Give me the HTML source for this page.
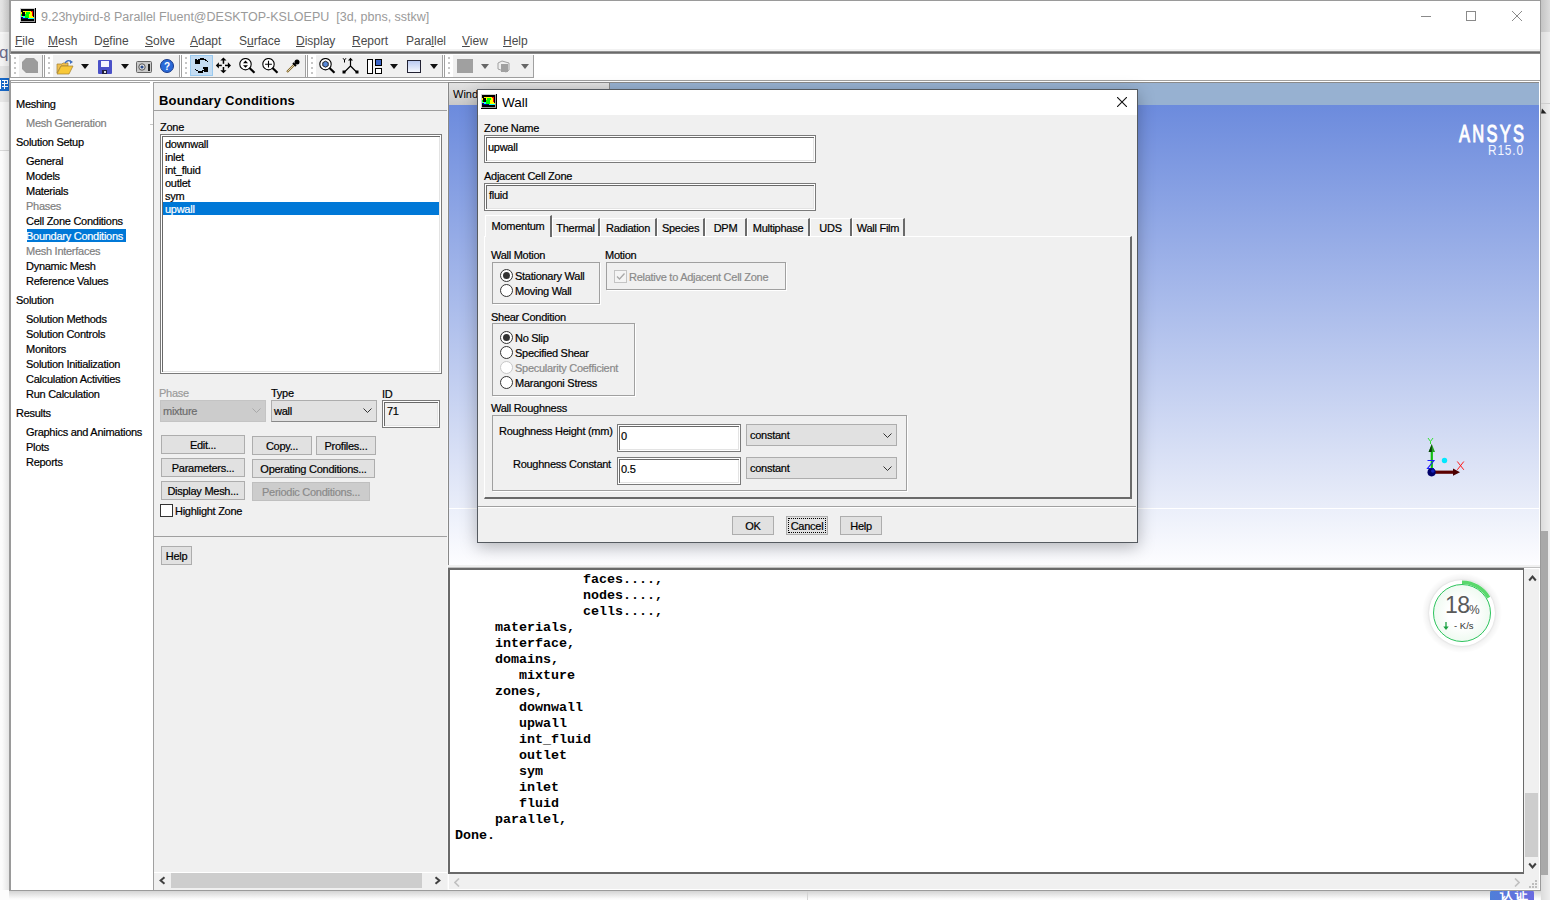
<!DOCTYPE html>
<html><head><meta charset="utf-8">
<style>
*{box-sizing:border-box;}
html,body{margin:0;padding:0;}
body{width:1550px;height:900px;position:relative;overflow:hidden;background:#f4f4f4;font-family:"Liberation Sans",sans-serif;font-size:11px;color:#000;}
.a{position:absolute;}
.t{position:absolute;white-space:nowrap;line-height:15px;font-size:11px;letter-spacing:-0.27px;-webkit-text-stroke:0.2px currentColor;}
.ln{position:absolute;background:#a0a0a0;}
.btn{background:#e1e1e1;border:1px solid #adadad;text-align:center;font-size:11px;letter-spacing:-0.27px;line-height:19px;white-space:nowrap;-webkit-text-stroke:0.2px currentColor;}
.btn.dis{background:#cccccc;border-color:#bfbfbf;color:#8a8a8a;}
.ent{border:1px solid #7a7a7a;box-shadow:inset 1px 1px 0 #fff,inset -1px -1px 0 #fff,inset 2px 2px 0 #696969,inset -2px -2px 0 #e3e3e3;}
.grp{border:1px solid #a0a0a0;box-shadow:1px 1px 0 #fff;}
.cmb{background:#e1e1e1;border:1px solid #adadad;}
.tab{height:18px;background:#f0f0f0;border-left:1px solid #fff;border-top:1px solid #fff;border-right:2px solid #6a6a6a;font-size:11px;letter-spacing:-0.27px;line-height:19px;text-align:center;white-space:nowrap;-webkit-text-stroke:0.2px currentColor;}
.tab.sel{line-height:21px;}
.rad{width:13px;height:13px;border-radius:50%;border:1px solid #333;background:#fff;}
.rad.on::after{content:"";position:absolute;left:2px;top:2px;width:7px;height:7px;border-radius:50%;background:#333;}
.rad.dis{border-color:#c8c8c8;}
</style></head>
<body>
<!-- desktop background pieces -->
<div class="a" style="left:0;top:0;width:10px;height:900px;background:#f2f2f2;"></div>
<div class="a" style="left:0;top:0;width:10px;height:32px;background:linear-gradient(90deg,#e4e4e4,#d4d4d4);"></div>
<div class="a" style="left:0;top:32px;width:10px;height:2px;background:#f6f6f6;"></div>
<div class="a" style="left:0;top:34px;width:10px;height:32px;background:#f3f3f3;"></div>
<div class="a" style="left:-1px;top:43px;font-size:17px;line-height:20px;color:#6b6b8a;">q</div>
<div class="a" style="left:0;top:66px;width:10px;height:12px;background:#e3e3e3;"></div>
<div class="a" style="left:0;top:78px;width:10px;height:13px;background:#1668c8;"></div>
<svg class="a" style="left:0;top:79px" width="9" height="11"><g fill="#fff"><rect x="0" y="1" width="1" height="9"/><rect x="2" y="1" width="6" height="1"/><rect x="2" y="4" width="6" height="1"/><rect x="2" y="7" width="6" height="1"/><rect x="4" y="1" width="1" height="9"/><rect x="7" y="1" width="1" height="4"/></g></svg>
<div class="a" style="left:0;top:91px;width:10px;height:11px;background:#e6e6e6;"></div>
<div class="a" style="left:0;top:102px;width:10px;height:48px;background:#f6f6f6;"></div>
<div class="a" style="left:0;top:150px;width:10px;height:1px;background:#d8d8d8;"></div>
<div class="a" style="left:0;top:151px;width:10px;height:749px;background:#fbfbfb;"></div>
<div class="a" style="left:2px;top:0;width:7px;height:895px;background:linear-gradient(90deg,rgba(0,0,0,0),rgba(0,0,0,0.09));"></div>
<div class="a" style="left:0;top:890px;width:1550px;height:10px;background:#fcfcfc;"></div><div class="a" style="left:9px;top:891px;width:1532px;height:8px;background:linear-gradient(rgba(0,0,0,0.16),rgba(0,0,0,0));"></div>
<div class="a" style="left:1541px;top:0;width:9px;height:900px;background:linear-gradient(90deg,#dcdcdc,#eeeeee);"></div>
<div class="a" style="left:1541px;top:0;width:9px;height:32px;background:linear-gradient(90deg,#c4c4c4,#dcdcdc);"></div>
<div class="a" style="left:1541px;top:103px;width:9px;height:1px;background:#cfcfcf;"></div>
<svg class="a" style="left:1541px;top:108px" width="6" height="6"><path d="M0 5.5H5.5L1 0.5Z" fill="#222"/></svg>
<div class="a" style="left:1541px;top:531px;width:7px;height:344px;background:#a9a9a9;"></div>
<div class="a" style="left:807px;top:891px;width:1px;height:9px;background:#d4d4d4;"></div>
<div class="a" style="left:1490px;top:890px;width:44px;height:10px;background:linear-gradient(90deg,#4f7fd8,#6a6ae0);border-radius:3px 3px 0 0;"></div>
<div class="a" style="left:1500px;top:887px;font-size:13px;line-height:16px;color:#fff;font-weight:bold;letter-spacing:2px;">&#35748;&#35777;</div>

<!-- main window -->
<div id="win" class="a" style="left:9px;top:0;width:1532px;height:891px;background:#fff;border:1px solid #9a9a9a;border-left:2px solid #9a9a9a;">
</div>

<!-- title bar -->
<div id="title">
  <svg class="a" style="left:20px;top:8px" width="16" height="15" viewBox="0 0 16 15">
    <rect x="0" y="0" width="15" height="14" fill="#d0d0d0"/><rect x="1" y="1" width="13" height="12" fill="#000"/><rect x="15" y="0" width="1" height="15" fill="#000"/><rect x="0" y="14" width="16" height="1" fill="#000"/><rect x="14" y="1" width="1" height="13" fill="#9a9a9a"/><rect x="1" y="13" width="14" height="1" fill="#9a9a9a"/>
    <rect x="3" y="3" width="8" height="1" fill="#ffff00"/><rect x="11" y="3" width="2" height="1" fill="#ff0000"/>
    <rect x="1" y="4" width="12" height="5" fill="#ffff00"/><rect x="6" y="4" width="4" height="2" fill="#00ff00"/><rect x="5" y="6" width="4" height="3" fill="#00ff00"/><rect x="12" y="3" width="1" height="5" fill="#ff0000"/><rect x="13" y="6" width="1" height="2" fill="#000"/>
    <rect x="1" y="6" width="1" height="2" fill="#00ff00"/><rect x="1" y="8" width="1" height="1" fill="#00ffff"/><rect x="2" y="4" width="3" height="4" fill="#000"/><rect x="3" y="8" width="2" height="1" fill="#00ffff"/>
    <rect x="1" y="9" width="2" height="1" fill="#000080"/><rect x="3" y="9" width="2" height="1" fill="#00ffff"/><rect x="5" y="9" width="4" height="1" fill="#00ff00"/><rect x="9" y="9" width="5" height="1" fill="#ffff00"/>
    <rect x="2" y="10" width="6" height="1" fill="#000080"/><rect x="8" y="10" width="6" height="1" fill="#00ffff"/>
  </svg>
  <div class="a" style="left:41px;top:9px;font-size:12.5px;line-height:16px;color:#9a9a9a;white-space:nowrap;">9.23hybird-8 Parallel Fluent@DESKTOP-KSLOEPU&nbsp;&nbsp;[3d, pbns, sstkw]</div>
  <!-- window buttons -->
  <div class="a" style="left:1421px;top:16px;width:10px;height:1px;background:#8a8a8a;"></div>
  <div class="a" style="left:1466px;top:11px;width:10px;height:10px;border:1px solid #8a8a8a;"></div>
  <svg class="a" style="left:1512px;top:11px" width="10" height="10" viewBox="0 0 10 10"><path d="M0 0L10 10M10 0L0 10" stroke="#8a8a8a" stroke-width="1"/></svg>
</div>

<!-- menubar -->
<div id="menu" style="color:#4a4a4a;font-size:12px;">
  <div class="a" style="left:15px;top:34px;line-height:15px;white-space:nowrap;"><u>F</u>ile</div>
  <div class="a" style="left:48px;top:34px;line-height:15px;white-space:nowrap;"><u>M</u>esh</div>
  <div class="a" style="left:94px;top:34px;line-height:15px;white-space:nowrap;">D<u>e</u>fine</div>
  <div class="a" style="left:145px;top:34px;line-height:15px;white-space:nowrap;"><u>S</u>olve</div>
  <div class="a" style="left:190px;top:34px;line-height:15px;white-space:nowrap;"><u>A</u>dapt</div>
  <div class="a" style="left:239px;top:34px;line-height:15px;white-space:nowrap;">S<u>u</u>rface</div>
  <div class="a" style="left:296px;top:34px;line-height:15px;white-space:nowrap;"><u>D</u>isplay</div>
  <div class="a" style="left:352px;top:34px;line-height:15px;white-space:nowrap;"><u>R</u>eport</div>
  <div class="a" style="left:406px;top:34px;line-height:15px;white-space:nowrap;">Para<u>l</u>lel</div>
  <div class="a" style="left:462px;top:34px;line-height:15px;white-space:nowrap;"><u>V</u>iew</div>
  <div class="a" style="left:503px;top:34px;line-height:15px;white-space:nowrap;"><u>H</u>elp</div>
</div>
<div class="a" style="left:11px;top:49px;width:1529px;height:2px;background:#f2f2f2;"></div>
<div class="a" style="left:11px;top:51px;width:1529px;height:3px;background:linear-gradient(#a8a8a8,#6a6a6a 50%,#9a9a9a);"></div>

<!-- toolbar -->
<div id="tb">
  <div class="a" style="left:10px;top:54px;width:1530px;height:26px;background:#fff;"></div>
  <!-- group backgrounds -->
  <div class="a" style="left:19px;top:55px;width:23px;height:22px;background:#f0f0f0;"></div>
  <div class="a" style="left:53px;top:55px;width:127px;height:22px;background:#f0f0f0;"></div>
  <div class="a" style="left:190px;top:55px;width:115px;height:22px;background:#f0f0f0;"></div>
  <div class="a" style="left:316px;top:55px;width:127px;height:22px;background:#f0f0f0;"></div>
  <div class="a" style="left:453px;top:55px;width:81px;height:22px;background:#f0f0f0;"></div>
  <!-- separators -->
  <div class="ln" style="left:10px;top:55px;width:1px;height:22px;"></div>
  <div class="ln" style="left:42px;top:55px;width:1px;height:22px;"></div>
  <div class="ln" style="left:44px;top:55px;width:1px;height:22px;"></div>
  <div class="ln" style="left:179px;top:55px;width:1px;height:22px;"></div>
  <div class="ln" style="left:181px;top:55px;width:1px;height:22px;"></div>
  <div class="ln" style="left:305px;top:55px;width:1px;height:22px;"></div>
  <div class="ln" style="left:307px;top:55px;width:1px;height:22px;"></div>
  <div class="ln" style="left:442px;top:55px;width:1px;height:22px;"></div>
  <div class="ln" style="left:444px;top:55px;width:1px;height:22px;"></div>
  <div class="ln" style="left:533px;top:55px;width:1px;height:23px;"></div>
  <div class="ln" style="left:10px;top:77px;width:524px;height:1px;"></div>
  <div class="ln" style="left:10px;top:80px;width:1530px;height:1px;"></div>
  <!-- grippers -->
  <svg class="a" style="left:14px;top:57px" width="3" height="18"><g fill="#c6c6c6"><rect x="0" y="0" width="2" height="2"/><rect x="0" y="5" width="2" height="2"/><rect x="0" y="10" width="2" height="2"/><rect x="0" y="15" width="2" height="2"/></g></svg>
  <svg class="a" style="left:48px;top:57px" width="3" height="18"><g fill="#c6c6c6"><rect x="0" y="0" width="2" height="2"/><rect x="0" y="5" width="2" height="2"/><rect x="0" y="10" width="2" height="2"/><rect x="0" y="15" width="2" height="2"/></g></svg>
  <svg class="a" style="left:185px;top:57px" width="3" height="18"><g fill="#c6c6c6"><rect x="0" y="0" width="2" height="2"/><rect x="0" y="5" width="2" height="2"/><rect x="0" y="10" width="2" height="2"/><rect x="0" y="15" width="2" height="2"/></g></svg>
  <svg class="a" style="left:311px;top:57px" width="3" height="18"><g fill="#c6c6c6"><rect x="0" y="0" width="2" height="2"/><rect x="0" y="5" width="2" height="2"/><rect x="0" y="10" width="2" height="2"/><rect x="0" y="15" width="2" height="2"/></g></svg>
  <svg class="a" style="left:448px;top:57px" width="3" height="18"><g fill="#c6c6c6"><rect x="0" y="0" width="2" height="2"/><rect x="0" y="5" width="2" height="2"/><rect x="0" y="10" width="2" height="2"/><rect x="0" y="15" width="2" height="2"/></g></svg>
  <!-- icons -->
  <svg class="a" style="left:22px;top:58px" width="16" height="15"><path d="M4 0H12L16 4V15H4L0 11V4Z" fill="#9c9c9c"/></svg>
  <svg class="a" style="left:56px;top:59px" width="18" height="16" viewBox="0 0 18 16"><path d="M1 5H6L7 4H12V7H5L1 14Z" fill="#f0c050" stroke="#a08030" stroke-width="0.7"/><path d="M1 15L5 7H17L13 15Z" fill="#f8c838" stroke="#a08030" stroke-width="0.7"/><path d="M9 4Q12 0 15 3" fill="none" stroke="#4070c0" stroke-width="1.3"/><path d="M14 1L17 3L14 5Z" fill="#4070c0"/></svg>
  <svg class="a" style="left:81px;top:64px" width="8" height="5"><path d="M0 0H8L4 5Z" fill="#111"/></svg>
  <svg class="a" style="left:98px;top:60px" width="14" height="14" viewBox="0 0 14 14"><rect x="0" y="0" width="14" height="14" rx="1" fill="#4a50c8"/><rect x="3" y="1" width="8" height="6" fill="#f4f4ff"/><rect x="4" y="10" width="5" height="4" fill="#202040"/><rect x="6" y="11" width="2" height="2" fill="#ddd"/></svg>
  <svg class="a" style="left:121px;top:64px" width="8" height="5"><path d="M0 0H8L4 5Z" fill="#111"/></svg>
  <svg class="a" style="left:136px;top:60px" width="16" height="13" viewBox="0 0 16 13"><rect x="0.5" y="1.5" width="15" height="11" rx="1" fill="#c8c8c8" stroke="#666" stroke-width="1"/><circle cx="6" cy="7" r="3.2" fill="#e8e8e8" stroke="#555"/><circle cx="6" cy="7" r="1.6" fill="#2a4a8a"/><rect x="12" y="4" width="2" height="7" fill="#222"/></svg>
  <svg class="a" style="left:160px;top:59px" width="14" height="14" viewBox="0 0 14 14"><circle cx="7" cy="7" r="6.5" fill="#2a6ad8" stroke="#1a3a8a" stroke-width="1"/><text x="7" y="11" font-size="10" font-weight="bold" text-anchor="middle" fill="#fff" font-family="Liberation Sans">?</text></svg>
  <!-- rotate (pressed) -->
  <div class="a" style="left:190px;top:55px;width:23px;height:21px;background:#c4dcf2;border:1px solid #99c9ef;"></div>
  <svg class="a" style="left:189px;top:54px" width="24" height="22" viewBox="0 0 24 22" shape-rendering="crispEdges"><g fill="#000"><rect x="6" y="5" width="2" height="5"/><rect x="8" y="6" width="3" height="4"/><rect x="9" y="5" width="2" height="1"/><rect x="11" y="4" width="4" height="2"/><rect x="15" y="5" width="2" height="1"/><rect x="16" y="6" width="2" height="1"/><rect x="18" y="7" width="1" height="1"/><rect x="15" y="13" width="4" height="5"/><rect x="14" y="13" width="1" height="2"/><rect x="6" y="15" width="1" height="1"/><rect x="7" y="16" width="2" height="1"/><rect x="9" y="17" width="5" height="2"/><rect x="13" y="16" width="2" height="1"/></g></svg>
  <svg class="a" style="left:215px;top:57px" width="17" height="17" viewBox="0 0 17 17"><g fill="#000"><path d="M8.4 0.5L5.3 3.6H11.5Z"/><rect x="7.7" y="3" width="1.5" height="3.8"/><path d="M8.4 16.3L5.3 13.2H11.5Z"/><rect x="7.7" y="10" width="1.5" height="3.8"/><path d="M0.8 8.4L3.9 5.3V11.5Z"/><rect x="3.5" y="7.7" width="3.3" height="1.5"/><path d="M16 8.4L12.9 5.3V11.5Z"/><rect x="10" y="7.7" width="3.3" height="1.5"/></g></svg>
  <svg class="a" style="left:239px;top:58px" width="17" height="16" viewBox="0 0 17 16"><circle cx="6.5" cy="6.2" r="5.7" fill="#fff" stroke="#000" stroke-width="1.1"/><path d="M10.5 10L15.5 14.8" stroke="#000" stroke-width="2.2"/><path d="M6.5 2.6L9 5.2H4Z M6.5 9.8L9 7.2H4Z" fill="#000"/></svg>
  <svg class="a" style="left:262px;top:58px" width="17" height="16" viewBox="0 0 17 16"><circle cx="6.5" cy="6.2" r="5.7" fill="#fff" stroke="#000" stroke-width="1.1"/><path d="M10.5 10L15.5 14.8" stroke="#000" stroke-width="2.2"/><path d="M6.5 2.8V9.6M3.1 6.2H9.9" stroke="#000" stroke-width="1.1"/></svg>
  <svg class="a" style="left:286px;top:59px" width="14" height="14" viewBox="0 0 14 14"><path d="M1 13L9 5" stroke="#806020" stroke-width="2.2"/><path d="M1.5 12.5L9 5" stroke="#f0f0d0" stroke-width="0.8"/><path d="M7 4L10 7" stroke="#000" stroke-width="2"/><circle cx="11" cy="3" r="2.5" fill="#000"/></svg>
  <svg class="a" style="left:319px;top:58px" width="17" height="16" viewBox="0 0 17 16"><circle cx="6.5" cy="6.2" r="5.7" fill="#fff" stroke="#000" stroke-width="1.1"/><path d="M10.5 10L15.5 14.8" stroke="#000" stroke-width="2.2"/><path d="M3.8 4.6L6.5 3.2L9.2 4.6V7.8L6.5 9.2L3.8 7.8Z" fill="#5a8ad8" stroke="#111" stroke-width="0.9"/></svg>
  <svg class="a" style="left:342px;top:57px" width="17" height="17" viewBox="0 0 17 17"><path d="M8.5 3V9L2 15.5M8.5 9L15 15.5" fill="none" stroke="#000" stroke-width="1.2"/><path d="M8.5 0.8L11 3.6H6Z" fill="#000"/><rect x="0.5" y="13.5" width="3" height="3" fill="#000"/><rect x="13.5" y="13.5" width="3" height="3" fill="#000"/><path d="M1 1.2L2.5 3L4 1.2M2.5 3V5.5" fill="none" stroke="#000" stroke-width="1"/></svg>
  <svg class="a" style="left:367px;top:59px" width="15" height="15" viewBox="0 0 15 15"><rect x="0.5" y="0.5" width="5" height="14" fill="#fff" stroke="#000"/><rect x="8.5" y="0.5" width="6" height="6" fill="#3a64c8" stroke="#000"/><rect x="8.5" y="9.5" width="6" height="5" fill="#fff" stroke="#000"/></svg>
  <svg class="a" style="left:390px;top:64px" width="8" height="5"><path d="M0 0H8L4 5Z" fill="#111"/></svg>
  <svg class="a" style="left:407px;top:60px" width="14" height="13" viewBox="0 0 14 13"><defs><linearGradient id="gsq" x1="0" y1="0" x2="0" y2="1"><stop offset="0" stop-color="#b8c8f0"/><stop offset="1" stop-color="#f8faff"/></linearGradient></defs><rect x="0.5" y="0.5" width="13" height="12" fill="url(#gsq)" stroke="#223" stroke-width="1"/></svg>
  <svg class="a" style="left:430px;top:64px" width="8" height="5"><path d="M0 0H8L4 5Z" fill="#111"/></svg>
  <div class="a" style="left:457px;top:59px;width:16px;height:14px;background:#a0a0a0;"></div>
  <svg class="a" style="left:481px;top:64px" width="8" height="5"><path d="M0 0H8L4 5Z" fill="#666"/></svg>
  <svg class="a" style="left:497px;top:60px" width="16" height="13" viewBox="0 0 16 13"><path d="M1 3L5 1L12 3V10L9 12L1 9Z" fill="#eee" stroke="#a0a0a0" stroke-width="1"/><path d="M4 4H11V12H4Z" fill="#a0a0a0"/></svg>
  <svg class="a" style="left:521px;top:64px" width="8" height="5"><path d="M0 0H8L4 5Z" fill="#666"/></svg>
</div>

<!-- navigation tree -->
<div id="tree">
  <div class="ln" style="left:10px;top:82px;width:140px;height:1px;"></div>
  <div class="ln" style="left:150px;top:124px;width:3px;height:1px;background:#c8c8c8;"></div>
  <div class="t" style="left:16px;top:97px;">Meshing</div>
  <div class="t" style="left:26px;top:116px;color:#808080;">Mesh Generation</div>
  <div class="t" style="left:16px;top:135px;">Solution Setup</div>
  <div class="t" style="left:26px;top:154px;">General</div>
  <div class="t" style="left:26px;top:169px;">Models</div>
  <div class="t" style="left:26px;top:184px;">Materials</div>
  <div class="t" style="left:26px;top:199px;color:#808080;">Phases</div>
  <div class="t" style="left:26px;top:214px;">Cell Zone Conditions</div>
  <div class="a" style="left:27px;top:229px;width:99px;height:13px;background:#0078d7;"></div>
  <div class="t" style="left:26px;top:229px;color:#fff;">Boundary Conditions</div>
  <div class="t" style="left:26px;top:244px;color:#808080;">Mesh Interfaces</div>
  <div class="t" style="left:26px;top:259px;">Dynamic Mesh</div>
  <div class="t" style="left:26px;top:274px;">Reference Values</div>
  <div class="t" style="left:16px;top:293px;">Solution</div>
  <div class="t" style="left:26px;top:312px;">Solution Methods</div>
  <div class="t" style="left:26px;top:327px;">Solution Controls</div>
  <div class="t" style="left:26px;top:342px;">Monitors</div>
  <div class="t" style="left:26px;top:357px;">Solution Initialization</div>
  <div class="t" style="left:26px;top:372px;">Calculation Activities</div>
  <div class="t" style="left:26px;top:387px;">Run Calculation</div>
  <div class="t" style="left:16px;top:406px;">Results</div>
  <div class="t" style="left:26px;top:425px;">Graphics and Animations</div>
  <div class="t" style="left:26px;top:440px;">Plots</div>
  <div class="t" style="left:26px;top:455px;">Reports</div>
</div>

<!-- task page -->
<div id="task">
  <div class="a" style="left:153px;top:82px;width:295px;height:808px;background:#f0f0f0;border-left:1px solid #a0a0a0;border-top:1px solid #a0a0a0;"></div>
  <div class="a" style="left:159px;top:93px;font-weight:bold;font-size:13px;line-height:16px;white-space:nowrap;letter-spacing:0.2px;">Boundary Conditions</div>
  <div class="ln" style="left:154px;top:110px;width:293px;height:1px;"></div>
  <div class="t" style="left:160px;top:120px;">Zone</div>
  <!-- listbox -->
  <div class="a ent" style="left:160px;top:134px;width:282px;height:240px;background:#fff;"></div>
  <div class="t" style="left:165px;top:137px;">downwall</div>
  <div class="t" style="left:165px;top:150px;">inlet</div>
  <div class="t" style="left:165px;top:163px;">int_fluid</div>
  <div class="t" style="left:165px;top:176px;">outlet</div>
  <div class="t" style="left:165px;top:189px;">sym</div>
  <div class="a" style="left:163px;top:202px;width:276px;height:13px;background:#0078d7;"></div>
  <div class="t" style="left:165px;top:202px;color:#fff;">upwall</div>
  <!-- phase/type/id -->
  <div class="t" style="left:159px;top:386px;color:#9a9a9a;">Phase</div>
  <div class="a" style="left:160px;top:400px;width:106px;height:22px;background:#cccccc;border:1px solid #c4c4c4;"></div>
  <div class="t" style="left:163px;top:404px;color:#6d6d6d;">mixture</div>
  <svg class="a" style="left:252px;top:408px" width="9" height="5"><path d="M0.5 0.5L4.5 4.5L8.5 0.5" fill="none" stroke="#a8a8a8" stroke-width="1"/></svg>
  <div class="t" style="left:271px;top:386px;">Type</div>
  <div class="a" style="left:271px;top:400px;width:106px;height:22px;background:#e1e1e1;border:1px solid #adadad;border-bottom-color:#888;"></div>
  <div class="t" style="left:274px;top:404px;">wall</div>
  <svg class="a" style="left:363px;top:408px" width="9" height="5"><path d="M0.5 0.5L4.5 4.5L8.5 0.5" fill="none" stroke="#333" stroke-width="1"/></svg>
  <div class="t" style="left:382px;top:387px;">ID</div>
  <div class="a ent" style="left:382px;top:400px;width:58px;height:28px;background:#f0f0f0;"></div>
  <div class="t" style="left:387px;top:404px;">71</div>
  <!-- buttons -->
  <div class="btn a" style="left:161px;top:435px;width:84px;height:19px;">Edit...</div>
  <div class="btn a" style="left:252px;top:436px;width:60px;height:19px;">Copy...</div>
  <div class="btn a" style="left:316px;top:436px;width:60px;height:19px;">Profiles...</div>
  <div class="btn a" style="left:161px;top:458px;width:84px;height:19px;">Parameters...</div>
  <div class="btn a" style="left:252px;top:459px;width:123px;height:19px;">Operating Conditions...</div>
  <div class="btn a" style="left:161px;top:481px;width:84px;height:19px;">Display Mesh...</div>
  <div class="btn a dis" style="left:252px;top:482px;width:118px;height:19px;">Periodic Conditions...</div>
  <div class="a" style="left:160px;top:504px;width:13px;height:13px;background:#fff;border:1px solid #333;"></div>
  <div class="t" style="left:175px;top:504px;">Highlight Zone</div>
  <div class="ln" style="left:154px;top:536px;width:293px;height:1px;"></div>
  <div class="btn a" style="left:161px;top:546px;width:31px;height:19px;">Help</div>
  <!-- h scrollbar -->
  <div class="a" style="left:154px;top:872px;width:293px;height:1px;background:#fff;"></div>
  <div class="a" style="left:154px;top:873px;width:293px;height:16px;background:#f0f0f0;"></div>
  <div class="a" style="left:171px;top:873px;width:251px;height:15px;background:#cdcdcd;"></div>
  <svg class="a" style="left:158px;top:876px" width="8" height="9" viewBox="0 0 8 9"><path d="M6.5 1.2L2.6 4.5L6.5 7.8" fill="none" stroke="#404040" stroke-width="2"/></svg>
  <svg class="a" style="left:434px;top:876px" width="8" height="9" viewBox="0 0 8 9"><path d="M1.5 1.2L5.4 4.5L1.5 7.8" fill="none" stroke="#404040" stroke-width="2"/></svg>
  <div class="a" style="left:447px;top:83px;width:1px;height:807px;background:#f6f6f6;"></div>
</div>

<!-- graphics window -->
<div id="gfx">
  <div class="a" style="left:448px;top:82px;width:91px;height:1px;background:#909090;"></div>
  <div class="a" style="left:448px;top:82px;width:1px;height:483px;background:#888;"></div>
  <div class="a" style="left:449px;top:83px;width:1090px;height:22px;background:#97b1d1;"></div>
  <div class="a" style="left:449px;top:83px;width:161px;height:22px;background:linear-gradient(#e2e2e2,#c8c8c8);border-right:1px solid #888;"></div>
  <div class="a" style="left:449px;top:82px;width:1091px;height:1px;background:#8a8a8a;"></div>
  
  <div class="a" style="left:453px;top:87px;font-size:11px;line-height:14px;white-space:nowrap;">Window 1</div>
  <div class="a" style="left:449px;top:105px;width:1090px;height:403px;background:linear-gradient(#6c8bdd,#e9edf9);"></div>
  <div class="a" style="left:449px;top:508px;width:1090px;height:1px;background:#ffffff;"></div>
  <div class="a" style="left:449px;top:509px;width:1090px;height:56px;background:linear-gradient(#ebeffa,#fdfdff);"></div>
  <div class="a" style="left:1539px;top:82px;width:1px;height:486px;background:#fff;"></div>
  <div class="a" style="left:1459px;top:121px;font-size:22px;line-height:24px;color:#fff;white-space:nowrap;letter-spacing:3px;-webkit-text-stroke:0.9px #fff;transform:scale(0.75,1.12);transform-origin:0 0;">ANSYS</div>
  <div class="a" style="left:1488px;top:142px;font-size:14.5px;line-height:16px;color:#f4f6ff;white-space:nowrap;letter-spacing:1px;transform:scaleX(0.82);transform-origin:0 0;">R15.0</div>
  <!-- axis triad -->
  <svg class="a" style="left:1415px;top:430px" width="60" height="55" viewBox="0 0 60 55">
    <path d="M16.8 20V40" stroke="#10c010" stroke-width="2.2"/>
    <path d="M16.8 14L13.6 22H20Z" fill="#20a020"/>
    <path d="M16.8 14L13.6 22H16.8Z" fill="#0a400a"/>
    <path d="M13 8L15.5 11.5L18 8M15.5 11.5V14" fill="none" stroke="#30e030" stroke-width="1"/>
    <path d="M12.5 30.5H19L12.5 38.5H19" fill="none" stroke="#1a1aff" stroke-width="1.1"/>
    <path d="M20 42.2H40" stroke="#5a0000" stroke-width="3.2"/>
    <path d="M45 42.2L38 38.6V45.8Z" fill="#4a0000"/>
    <path d="M42.3 31.5L48.8 39.8M48.8 31.5L42.3 39.8" stroke="#ff1a1a" stroke-width="1"/>
    <circle cx="16.6" cy="42.3" r="4.1" fill="#00006a"/>
    <circle cx="17.8" cy="41" r="1.8" fill="#1a2ad0" opacity="0.8"/>
    <circle cx="29.5" cy="30.5" r="2.7" fill="#00e8ff"/>
  </svg>
  <div class="a" style="left:448px;top:565px;width:1092px;height:2px;background:#f0f0f0;"></div>
</div>

<!-- console -->
<div id="con">
  <div class="a" style="left:448px;top:567px;width:1092px;height:1px;background:#c0c0c0;"></div>
  <div class="a" style="left:448px;top:568px;width:1076px;height:306px;background:#fff;border-top:2px solid #696969;border-left:2px solid #696969;border-right:1px solid #696969;border-bottom:2px solid #696969;"></div>
  <pre class="a" style="left:455px;top:572px;margin:0;font-family:'Liberation Mono',monospace;font-weight:bold;font-size:13.33px;line-height:16px;color:#000;">                faces....,
                nodes....,
                cells....,
     materials,
     interface,
     domains,
        mixture
     zones,
        downwall
        upwall
        int_fluid
        outlet
        sym
        inlet
        fluid
     parallel,
Done.</pre>
  <!-- v scrollbar -->
  <div class="a" style="left:1524px;top:569px;width:15px;height:305px;background:#f0f0f0;"></div>
  <svg class="a" style="left:1528px;top:574px" width="9" height="8" viewBox="0 0 9 8"><path d="M1.2 6.5L4.5 2.6L7.8 6.5" fill="none" stroke="#404040" stroke-width="2"/></svg>
  <div class="a" style="left:1525px;top:793px;width:13px;height:64px;background:#cdcdcd;"></div>
  <svg class="a" style="left:1528px;top:862px" width="9" height="8" viewBox="0 0 9 8"><path d="M1.2 1.5L4.5 5.4L7.8 1.5" fill="none" stroke="#404040" stroke-width="2"/></svg>
  <!-- h scrollbar -->
  <div class="a" style="left:449px;top:874px;width:1090px;height:15px;background:#f0f0f0;"></div>
  <svg class="a" style="left:454px;top:878px" width="6" height="9"><path d="M5 0.5L1 4.5L5 8.5" fill="none" stroke="#c0c0c0" stroke-width="1.6"/></svg>
  <svg class="a" style="left:1514px;top:878px" width="6" height="9"><path d="M1 0.5L5 4.5L1 8.5" fill="none" stroke="#c0c0c0" stroke-width="1.6"/></svg>
  <svg class="a" style="left:1529px;top:880px" width="9" height="9"><g fill="#bdbdbd"><rect x="6" y="0" width="2" height="2"/><rect x="3" y="3" width="2" height="2"/><rect x="6" y="3" width="2" height="2"/><rect x="0" y="6" width="2" height="2"/><rect x="3" y="6" width="2" height="2"/><rect x="6" y="6" width="2" height="2"/></g></svg>
  <!-- net speed widget -->
  <div class="a" style="left:1422px;top:573px;width:80px;height:80px;border-radius:50%;background:radial-gradient(circle,rgba(0,0,0,0.05) 60%,rgba(0,0,0,0) 71%);"></div>
  <div class="a" style="left:1429px;top:580px;width:66px;height:66px;border-radius:50%;background:#fff;box-shadow:0 0 2px rgba(0,0,0,0.15);"></div>
  <div class="a" style="left:1433px;top:584px;width:58px;height:58px;border-radius:50%;background:radial-gradient(circle at 50% 50%,#ffffff 35%,#e2f6e6 100%);border:1.3px solid #2ec45e;"></div>
  <svg class="a" style="left:1429px;top:580px" width="66" height="66" viewBox="0 0 66 66"><path d="M33 2.2A30.8 30.8 0 0 1 59.7 17.6" fill="none" stroke="#5ad86c" stroke-width="3.6"/></svg>
  <div class="a" style="left:1445px;top:592px;font-size:23px;line-height:26px;color:#5a5a5a;white-space:nowrap;letter-spacing:-0.5px;">18</div>
  <div class="a" style="left:1469px;top:603px;font-size:12px;line-height:14px;color:#4a4a4a;white-space:nowrap;">%</div>
  <svg class="a" style="left:1443px;top:622px" width="6" height="8"><path d="M3 0V6" stroke="#18a040" stroke-width="1.3"/><path d="M0.3 4.5L3 8L5.7 4.5Z" fill="#18a040"/></svg>
  <div class="a" style="left:1454px;top:620px;font-size:9.5px;line-height:12px;color:#333;white-space:nowrap;">- K/s</div>
</div>

<!-- Wall dialog -->
<div id="dlg">
  <div class="a" style="left:477px;top:89px;width:661px;height:454px;background:#f0f0f0;border:1px solid #555a60;box-shadow:0 4px 16px rgba(0,0,0,0.28);"></div>
  <div class="a" style="left:478px;top:90px;width:659px;height:25px;background:#fff;"></div>
  <svg class="a" style="left:481px;top:94px" width="16" height="15" viewBox="0 0 16 15">
    <rect x="0" y="0" width="15" height="14" fill="#d0d0d0"/><rect x="1" y="1" width="13" height="12" fill="#000"/><rect x="15" y="0" width="1" height="15" fill="#000"/><rect x="0" y="14" width="16" height="1" fill="#000"/><rect x="14" y="1" width="1" height="13" fill="#9a9a9a"/><rect x="1" y="13" width="14" height="1" fill="#9a9a9a"/>
    <rect x="3" y="3" width="8" height="1" fill="#ffff00"/><rect x="11" y="3" width="2" height="1" fill="#ff0000"/>
    <rect x="1" y="4" width="12" height="5" fill="#ffff00"/><rect x="6" y="4" width="4" height="2" fill="#00ff00"/><rect x="5" y="6" width="4" height="3" fill="#00ff00"/><rect x="12" y="3" width="1" height="5" fill="#ff0000"/><rect x="13" y="6" width="1" height="2" fill="#000"/>
    <rect x="1" y="6" width="1" height="2" fill="#00ff00"/><rect x="1" y="8" width="1" height="1" fill="#00ffff"/><rect x="2" y="4" width="3" height="4" fill="#000"/><rect x="3" y="8" width="2" height="1" fill="#00ffff"/>
    <rect x="1" y="9" width="2" height="1" fill="#000080"/><rect x="3" y="9" width="2" height="1" fill="#00ffff"/><rect x="5" y="9" width="4" height="1" fill="#00ff00"/><rect x="9" y="9" width="5" height="1" fill="#ffff00"/>
    <rect x="2" y="10" width="6" height="1" fill="#000080"/><rect x="8" y="10" width="6" height="1" fill="#00ffff"/>
  </svg>
  <div class="a" style="left:502px;top:95px;font-size:13.5px;line-height:16px;white-space:nowrap;">Wall</div>
  <svg class="a" style="left:1117px;top:97px" width="10" height="10" viewBox="0 0 10 10"><path d="M0 0L10 10M10 0L0 10" stroke="#111" stroke-width="1.1"/></svg>

  <div class="t" style="left:484px;top:121px;">Zone Name</div>
  <div class="a ent" style="left:484px;top:135px;width:332px;height:28px;background:#fff;"></div>
  <div class="t" style="left:488px;top:140px;">upwall</div>
  <div class="t" style="left:484px;top:169px;">Adjacent Cell Zone</div>
  <div class="a ent" style="left:484px;top:183px;width:332px;height:28px;background:#f0f0f0;"></div>
  <div class="t" style="left:489px;top:188px;">fluid</div>

  <!-- tabs -->
  <div class="a" style="left:484px;top:236px;width:648px;height:263px;border-top:1px solid #fff;border-left:1px solid #fff;border-right:2px solid #6a6a6a;border-bottom:2px solid #6a6a6a;"></div>
  <div class="tab a" style="left:552px;top:218px;width:48px;">Thermal</div>
  <div class="tab a" style="left:600px;top:218px;width:57px;">Radiation</div>
  <div class="tab a" style="left:657px;top:218px;width:48px;">Species</div>
  <div class="tab a" style="left:705px;top:218px;width:42px;">DPM</div>
  <div class="tab a" style="left:747px;top:218px;width:63px;">Multiphase</div>
  <div class="tab a" style="left:810px;top:218px;width:42px;">UDS</div>
  <div class="tab a" style="left:852px;top:218px;width:53px;">Wall Film</div>
  <div class="tab a sel" style="left:485px;top:215px;width:67px;height:22px;">Momentum</div>

  <!-- wall motion -->
  <div class="t" style="left:491px;top:248px;">Wall Motion</div>
  <div class="a grp" style="left:492px;top:262px;width:108px;height:42px;"></div>
  <div class="a rad on" style="left:500px;top:269px;"></div>
  <div class="t" style="left:515px;top:269px;">Stationary Wall</div>
  <div class="a rad" style="left:500px;top:284px;"></div>
  <div class="t" style="left:515px;top:284px;">Moving Wall</div>

  <div class="t" style="left:605px;top:248px;">Motion</div>
  <div class="a grp" style="left:606px;top:262px;width:180px;height:28px;"></div>
  <div class="a" style="left:614px;top:270px;width:13px;height:13px;border:1px solid #c4c4c4;background:#f4f4f4;"></div>
  <svg class="a" style="left:615px;top:271px" width="11" height="11"><path d="M2 5.5L4.5 8L9.5 2.5" fill="none" stroke="#a8a8a8" stroke-width="1.3"/></svg>
  <div class="t" style="left:629px;top:270px;color:#8a8a8a;">Relative to Adjacent Cell Zone</div>

  <!-- shear -->
  <div class="t" style="left:491px;top:310px;">Shear Condition</div>
  <div class="a grp" style="left:492px;top:323px;width:143px;height:73px;"></div>
  <div class="a rad on" style="left:500px;top:331px;"></div>
  <div class="t" style="left:515px;top:331px;">No Slip</div>
  <div class="a rad" style="left:500px;top:346px;"></div>
  <div class="t" style="left:515px;top:346px;">Specified Shear</div>
  <div class="a rad dis" style="left:500px;top:361px;"></div>
  <div class="t" style="left:515px;top:361px;color:#8a8a8a;">Specularity Coefficient</div>
  <div class="a rad" style="left:500px;top:376px;"></div>
  <div class="t" style="left:515px;top:376px;">Marangoni Stress</div>

  <!-- roughness -->
  <div class="t" style="left:491px;top:401px;">Wall Roughness</div>
  <div class="a grp" style="left:492px;top:415px;width:415px;height:76px;"></div>
  <div class="t" style="left:499px;top:424px;">Roughness Height (mm)</div>
  <div class="a ent" style="left:617px;top:424px;width:124px;height:28px;background:#fff;"></div>
  <div class="t" style="left:621px;top:429px;">0</div>
  <div class="a cmb" style="left:746px;top:424px;width:151px;height:22px;"></div>
  <div class="t" style="left:750px;top:428px;">constant</div>
  <svg class="a" style="left:883px;top:433px" width="9" height="5"><path d="M0.5 0.5L4.5 4.5L8.5 0.5" fill="none" stroke="#333" stroke-width="1"/></svg>
  <div class="t" style="left:513px;top:457px;">Roughness Constant</div>
  <div class="a ent" style="left:617px;top:457px;width:124px;height:28px;background:#fff;"></div>
  <div class="t" style="left:621px;top:462px;">0.5</div>
  <div class="a cmb" style="left:746px;top:457px;width:151px;height:22px;"></div>
  <div class="t" style="left:750px;top:461px;">constant</div>
  <svg class="a" style="left:883px;top:466px" width="9" height="5"><path d="M0.5 0.5L4.5 4.5L8.5 0.5" fill="none" stroke="#333" stroke-width="1"/></svg>

  <div class="a" style="left:478px;top:506px;width:658px;height:1px;background:#a0a0a0;"></div>
  <div class="a" style="left:478px;top:507px;width:658px;height:1px;background:#fff;"></div>
  <div class="btn a" style="left:732px;top:516px;width:42px;height:19px;">OK</div>
  <div class="btn a" style="left:786px;top:516px;width:42px;height:19px;">Cancel</div>
  <div class="a" style="left:788px;top:518px;width:38px;height:15px;border:1px dotted #000;"></div>
  <div class="btn a" style="left:840px;top:516px;width:42px;height:19px;">Help</div>
</div>

</body></html>
